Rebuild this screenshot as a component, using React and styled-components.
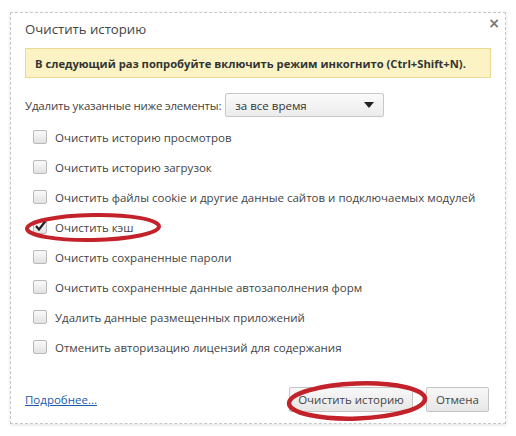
import styled, { createGlobalStyle } from 'styled-components'

const GlobalStyle = createGlobalStyle`
  html, body {
    margin: 0;
    padding: 0;
    background: #fff;
  }
  body {
    font-family: "Open Sans", "Noto Sans", sans-serif;
    color: #333;
  }
`

const Page = styled.div`
  width: 516px;
  height: 436px;
  padding: 12px 10px 0 10px;
  box-sizing: border-box;
`

const Dialog = styled.div`
  position: relative;
  width: 496px;
  height: 412px;
  box-sizing: border-box;
  border: 1px dashed #c6c6c6;
  box-shadow: 0 1px 3px rgba(0, 0, 0, 0.12);
  background: #fff;
  padding: 6px 14px 0 14px;
  display: flex;
  flex-direction: column;
  white-space: nowrap;
`

const Title = styled.h1`
  margin: 0;
  font-size: 13.2px;
  font-weight: 400;
  color: #444;
  line-height: 20px;
`

const Close = styled.button`
  position: absolute;
  top: 2px;
  right: 5px;
  border: none;
  background: none;
  padding: 0;
  font-size: 14px;
  font-weight: 700;
  color: #777;
  font-family: "DejaVu Sans", sans-serif;
  cursor: pointer;
`

const Banner = styled.div`
  margin-top: 9px;
  height: 30px;
  box-sizing: border-box;
  background: #fbf3c3;
  border: 1px solid #e9d992;
  padding: 0 9px;
  display: flex;
  align-items: center;
  font-size: 11.2px;
  font-weight: 700;
  color: #333;
`

const RangeRow = styled.div`
  margin-top: 15px;
  display: flex;
  align-items: center;
  gap: 4px;
  font-size: 11.5px;
  letter-spacing: -0.2px;
  color: #444;
  height: 24px;
`

const Select = styled.div`
  width: 159px;
  height: 24px;
  box-sizing: border-box;
  border: 1px solid #c8c8c8;
  border-radius: 2px;
  background: linear-gradient(#fafafa, #ececec);
  display: flex;
  align-items: center;
  justify-content: space-between;
  padding: 0 9px 0 9px;
  font-size: 11.5px;
  letter-spacing: 0;
  color: #333;
`

const Arrow = styled.span`
  width: 0;
  height: 0;
  border-left: 5px solid transparent;
  border-right: 5px solid transparent;
  border-top: 6px solid #222;
`

const List = styled.div`
  margin-top: 5px;
  display: flex;
  flex-direction: column;
`

const Item = styled.label`
  height: 30px;
  display: flex;
  align-items: center;
  gap: 8px;
  padding-left: 8px;
  font-size: 11.5px;
  color: #444;
`

const Box = styled.span`
  position: relative;
  width: 12px;
  height: 12px;
  border: 1px solid #b9b9b9;
  border-radius: 2px;
  background: linear-gradient(#fafafa, #e2e2e2);
  flex-shrink: 0;
`

const Tick = styled.svg`
  position: absolute;
  left: 0;
  top: -2px;
`

const Footer = styled.div`
  margin-top: auto;
  height: 48px;
  display: flex;
  align-items: center;
  justify-content: space-between;
  margin-right: 2px;
`

const Link = styled.a`
  font-size: 11.5px;
  color: #1a5bb0;
  text-decoration: underline;
  cursor: pointer;
`

const Buttons = styled.div`
  display: flex;
  gap: 13px;
`

const Button = styled.button`
  height: 25px;
  min-width: ${({ $w }) => $w}px;
  box-sizing: border-box;
  border: 1px solid #c4c4c4;
  border-radius: 2px;
  background: linear-gradient(#f8f8f8, #e6e6e6);
  font-family: "Open Sans", "Noto Sans", sans-serif;
  font-size: 11.5px;
  color: #444;
  padding: 0 8px;
`

const Mark = styled.svg`
  position: absolute;
  pointer-events: none;
  overflow: visible;
`

const ITEMS = [
  { label: 'Очистить историю просмотров' },
  { label: 'Очистить историю загрузок' },
  { label: 'Очистить файлы cookie и другие данные сайтов и подключаемых модулей' },
  { label: 'Очистить кэш', checked: true },
  { label: 'Очистить сохраненные пароли' },
  { label: 'Очистить сохраненные данные автозаполнения форм' },
  { label: 'Удалить данные размещенных приложений' },
  { label: 'Отменить авторизацию лицензий для содержания' },
]

export default function App() {
  return (
    <>
      <GlobalStyle />
      <Page>
        <Dialog>
          <Title>Очистить историю</Title>
          <Close>×</Close>
          <Banner>В следующий раз попробуйте включить режим инкогнито (Ctrl+Shift+N).</Banner>
          <RangeRow>
            <span>Удалить указанные ниже элементы:</span>
            <Select>
              <span>за все время</span>
              <Arrow />
            </Select>
          </RangeRow>
          <List>
            {ITEMS.map(({ label, checked }) => (
              <Item key={label}>
                <Box>
                  {checked && (
                    <Tick width="13" height="13" viewBox="0 0 13 13">
                      <path d="M2 7 L5 10.5 L11.5 2" fill="none" stroke="#222" strokeWidth="2.2" />
                    </Tick>
                  )}
                </Box>
                {label}
              </Item>
            ))}
          </List>
          <Footer>
            <Link>Подробнее...</Link>
            <Buttons>
              <Button $w={124}>Очистить историю</Button>
              <Button $w={63}>Отмена</Button>
            </Buttons>
          </Footer>
          <Mark style={{ left: 14, top: 200 }} width="137" height="29">
            <ellipse cx="68" cy="14.5" rx="66" ry="12.5" fill="none" stroke="#c4222b" strokeWidth="4" transform="rotate(-1 68 14.5)" />
          </Mark>
          <Mark style={{ left: 276, top: 368 }} width="141" height="40">
            <ellipse cx="70" cy="20" rx="68" ry="17.5" fill="none" stroke="#c4222b" strokeWidth="4.5" transform="rotate(-2 70 20)" />
          </Mark>
        </Dialog>
      </Page>
    </>
  )
}
